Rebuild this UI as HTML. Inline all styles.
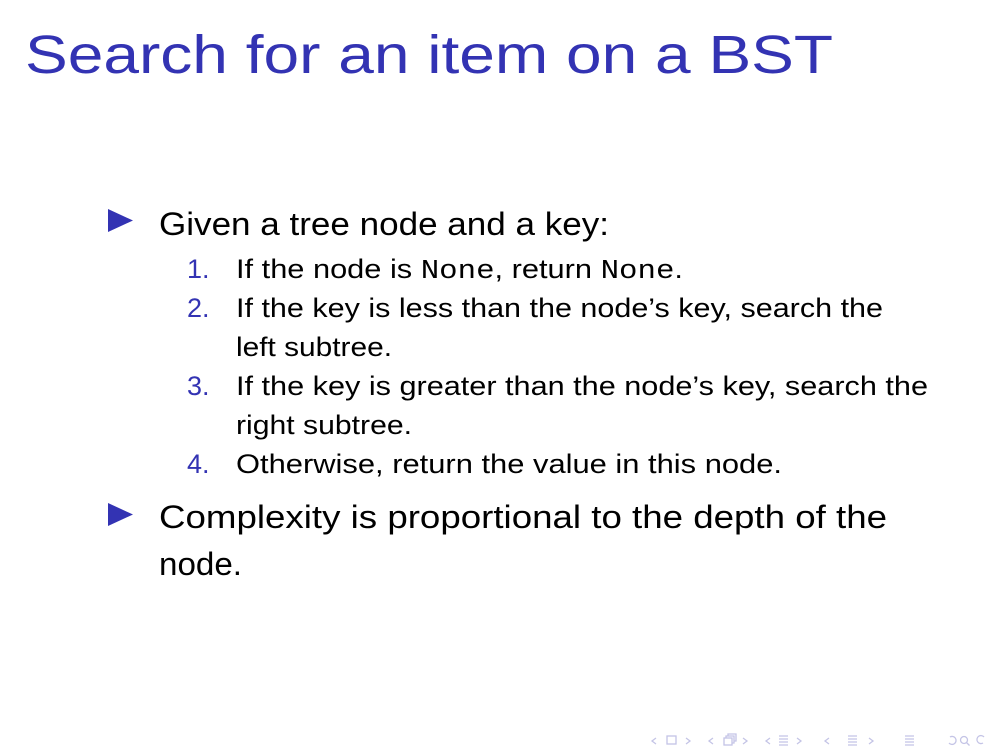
<!DOCTYPE html>
<html><head><meta charset="utf-8"><style>
html,body{margin:0;padding:0;background:#fff;}
svg{display:block}
text{font-family:"Liberation Sans",sans-serif;}
.m{font-family:"Liberation Mono",monospace;}
</style></head><body>
<svg width="1008" height="756" viewBox="0 0 1008 756" xmlns="http://www.w3.org/2000/svg">
<text x="25" y="73" font-size="54" fill="#3333b3" textLength="808" lengthAdjust="spacingAndGlyphs">Search for an item on a BST</text>

<polygon points="108,209 133,220.5 108,232" fill="#3333b3"/>
<text x="159" y="235" font-size="32" fill="#000" textLength="450" lengthAdjust="spacingAndGlyphs">Given a tree node and a key:</text>

<g font-size="27" fill="#000">
<text x="187" y="278" fill="#3333b3">1.</text>
<text x="236" y="278" textLength="447" lengthAdjust="spacingAndGlyphs">If the node is <tspan class="m">None</tspan>, return <tspan class="m">None</tspan>.</text>
<text x="187" y="317" fill="#3333b3">2.</text>
<text x="236" y="317" textLength="647" lengthAdjust="spacingAndGlyphs">If the key is less than the node’s key, search the</text>
<text x="236" y="356" textLength="156" lengthAdjust="spacingAndGlyphs">left subtree.</text>
<text x="187" y="395" fill="#3333b3">3.</text>
<text x="236" y="395" textLength="692" lengthAdjust="spacingAndGlyphs">If the key is greater than the node’s key, search the</text>
<text x="236" y="434" textLength="176" lengthAdjust="spacingAndGlyphs">right subtree.</text>
<text x="187" y="473" fill="#3333b3">4.</text>
<text x="236" y="473" textLength="546" lengthAdjust="spacingAndGlyphs">Otherwise, return the value in this node.</text>
</g>

<polygon points="108,503 133,514.5 108,526" fill="#3333b3"/>
<text x="159" y="528" font-size="32" fill="#000" textLength="728" lengthAdjust="spacingAndGlyphs">Complexity is proportional to the depth of the</text>
<text x="159" y="575" font-size="32" fill="#000" textLength="83" lengthAdjust="spacingAndGlyphs">node.</text>

<g fill="none" stroke="#c4c4e6" stroke-width="1.3">
<path d="M656,738 L652,741 L656,744"/>
<rect x="667" y="736" width="9" height="8"/>
<path d="M686,738 L690,741 L686,744"/>
<path d="M713,738 L709,741 L713,744"/>
<rect x="724" y="738" width="8" height="7"/><path d="M726,738 v-2 h8 v7 h-2 M728,736 v-2 h8 v7 h-2"/>
<path d="M743,738 L747,741 L743,744"/>
<path d="M770,738 L766,741 L770,744"/>
<path d="M779,736 h9 M779,739 h9 M779,742 h9 M779,745 h9"/>
<path d="M797,738 L801,741 L797,744"/>
<path d="M829,738 L825,741 L829,744"/>
<path d="M848,736 h9 M848,739 h9 M848,742 h9 M848,745 h9"/>
<path d="M869,738 L873,741 L869,744"/>
<path d="M905,736 h9 M905,739 h9 M905,742 h9 M905,745 h9"/>
<path d="M950,737 a4,4 0 1 1 -1,6"/>
<circle cx="964" cy="740" r="3.5"/><path d="M966.5,742.5 l3,3"/>
<path d="M983,743 a4,4 0 1 1 1,-6"/>
</g>
</svg>
</body></html>
